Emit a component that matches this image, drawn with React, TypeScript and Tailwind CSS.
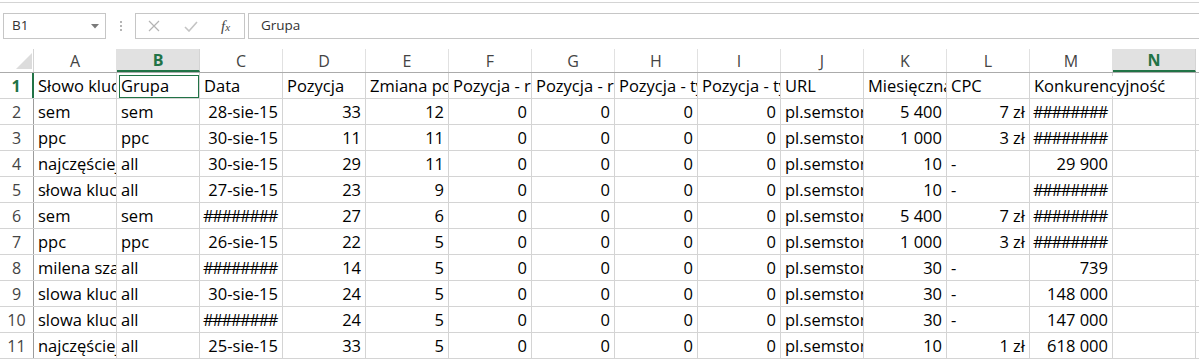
import React from "react";

const FONT = { fontFamily: '"Open Sans", "Liberation Sans", sans-serif' };

type Cell = { t: string; a?: "l" | "r"; ov?: boolean; dash?: boolean };

const COLS = ["A", "B", "C", "D", "E", "F", "G", "H", "I", "J", "K", "L", "M", "N"];
const SEL_COLS = new Set(["B", "N"]);

const H = "########";

const header: Cell[] = [
  { t: "Słowo kluczowe" },
  { t: "Grupa" },
  { t: "Data" },
  { t: "Pozycja" },
  { t: "Zmiana pozycji" },
  { t: "Pozycja - rok" },
  { t: "Pozycja - rok" },
  { t: "Pozycja - tydzień" },
  { t: "Pozycja - tydzień" },
  { t: "URL" },
  { t: "Miesięczna liczba" },
  { t: "CPC" },
  { t: "Konkurencyjność", ov: true },
  { t: "" },
];

type Row = [string, string, string, number, number, string, string, string];

const data: Row[] = [
  ["sem", "sem", "28-sie-15", 33, 12, "5 400", "7 zł", H],
  ["ppc", "ppc", "30-sie-15", 11, 11, "1 000", "3 zł", H],
  ["najczęściej wyszukiwane", "all", "30-sie-15", 29, 11, "10", "-", "29 900"],
  ["słowa kluczowe", "all", "27-sie-15", 23, 9, "10", "-", H],
  ["sem", "sem", H, 27, 6, "5 400", "7 zł", H],
  ["ppc", "ppc", "26-sie-15", 22, 5, "1 000", "3 zł", H],
  ["milena szafranek", "all", H, 14, 5, "30", "-", "739"],
  ["slowa kluczowe", "all", "30-sie-15", 24, 5, "30", "-", "148 000"],
  ["slowa kluczowe", "all", H, 24, 5, "30", "-", "147 000"],
  ["najczęściej wyszukiwane", "all", "25-sie-15", 33, 5, "10", "1 zł", "618 000"],
];

function rowCells(r: Row): Cell[] {
  return [
    { t: r[0] },
    { t: r[1] },
    { t: r[2], a: "r" },
    { t: String(r[3]), a: "r" },
    { t: String(r[4]), a: "r" },
    { t: "0", a: "r" },
    { t: "0", a: "r" },
    { t: "0", a: "r" },
    { t: "0", a: "r" },
    { t: "pl.semstorm.com" },
    { t: r[5], a: "r" },
    r[6] === "-" ? { t: "-", dash: true } : { t: r[6], a: "r" },
    { t: r[7], a: "r" },
    { t: "" },
  ];
}

function DataCell({ c, selected }: { c: Cell; selected?: boolean }) {
  const isHash = c.t === H;
  return (
    <div
      className={
        "relative w-[83px] shrink-0 h-full border-r border-[#d4d4d4] flex items-end pb-[2px] whitespace-nowrap text-[16.5px] leading-[20px] text-black " +
        (c.ov ? "overflow-visible z-10 " : "overflow-hidden ") +
        (c.a === "r" ? "justify-end " : "justify-start ") +
        (isHash ? "pl-[2px] pr-[5px]" : "px-[4px]")
      }
    >
      <span className={(c.ov ? "bg-white " : "") + (isHash ? "tracking-[-1.4px]" : "")}>{c.t}</span>
      {selected && (
        <div className="absolute left-[2px] right-[0px] top-[2px] bottom-[0px] border border-[#217346] pointer-events-none" />
      )}
    </div>
  );
}

export default function App() {
  return (
    <div className="w-[1199px] h-[361px] bg-white overflow-hidden" style={FONT}>
      {/* top line */}
      <div className="h-[3px] border-b border-[#d4d4d4]" />
      {/* formula bar */}
      <div className="h-[46px] flex items-start pt-[10px]">
        <div className="ml-[3px] w-[103px] h-[26px] border border-[#c6c6c6] flex items-center justify-between pl-[8px] pr-[6px]">
          <span className="text-[13.5px] text-[#333] leading-none">B1</span>
          <svg width="8" height="5" viewBox="0 0 8 5" className="mt-[1px]">
            <path d="M0 0 L8 0 L4 4.5 Z" fill="#7a7a7a" />
          </svg>
        </div>
        <div className="w-[29px] h-[26px] flex flex-col items-center justify-center gap-[2px]">
          <div className="w-[2px] h-[2px] bg-[#b5b5b5]" />
          <div className="w-[2px] h-[2px] bg-[#b5b5b5]" />
          <div className="w-[2px] h-[2px] bg-[#b5b5b5]" />
        </div>
        <div className="w-[110px] h-[26px] border border-[#c6c6c6] flex items-center">
          <svg width="12" height="12" viewBox="0 0 12 12" className="ml-[12px]">
            <path d="M1 1 L11 11 M11 1 L1 11" stroke="#b4b4b4" strokeWidth="1.2" />
          </svg>
          <svg width="14" height="11" viewBox="0 0 14 11" className="ml-[24px]">
            <path d="M1 6 L5 10 L13 1" stroke="#c4c4c4" strokeWidth="1.6" fill="none" />
          </svg>
          <span
            className="ml-[23px] text-[15px] italic text-[#444] leading-none"
            style={{ fontFamily: '"Liberation Serif", serif' }}
          >
            f<span className="text-[11px]">x</span>
          </span>
        </div>
        <div className="ml-[3px] flex-1 h-[26px] border border-r-0 border-[#c6c6c6] flex items-center pl-[12px]">
          <span className="text-[13.5px] text-[#333] leading-none">Grupa</span>
        </div>
      </div>

      {/* column headers */}
      <div className="h-[24px] flex border-b border-[#ababab]">
        <div className="w-[34px] shrink-0 h-full border-r border-[#d4d4d4] relative overflow-hidden">
          <svg width="34" height="23" viewBox="0 0 34 23" className="absolute left-0 top-0">
            <path d="M16 20 L32 20 L32 4 Z" fill="#dcdcdc" />
          </svg>
        </div>
        {COLS.map((c) => (
          <div
            key={c}
            className={
              "w-[83px] shrink-0 h-full flex items-center justify-center text-[16px] leading-none " +
              (SEL_COLS.has(c)
                ? "bg-[#e1e1e1] font-bold text-[#217346] border-b-2 border-[#217346] border-r border-r-[#d4d4d4]"
                : "text-[#444] border-r border-[#e1e1e1]")
            }
          >
            {c}
          </div>
        ))}
      </div>

      {/* row 1 */}
      <div className="h-[26px] flex border-b border-[#d4d4d4]">
        <div className="w-[34px] shrink-0 h-full border-r-2 border-[#217346] flex items-end justify-center pb-[2px] text-[16px] leading-[20px] font-bold text-[#217346]">
          1
        </div>
        {header.map((c, i) => (
          <DataCell key={i} c={c} selected={i === 1} />
        ))}
      </div>

      {/* data rows */}
      {data.map((r, ri) => (
        <div key={ri} className="h-[26px] flex border-b border-[#d4d4d4]">
          <div className="w-[34px] shrink-0 h-full border-r border-[#9c9c9c] flex items-end justify-center pb-[2px] text-[16px] leading-[20px] text-[#444]">
            {ri + 2}
          </div>
          {rowCells(r).map((c, i) => (
            <DataCell key={i} c={c} />
          ))}
        </div>
      ))}
    </div>
  );
}
